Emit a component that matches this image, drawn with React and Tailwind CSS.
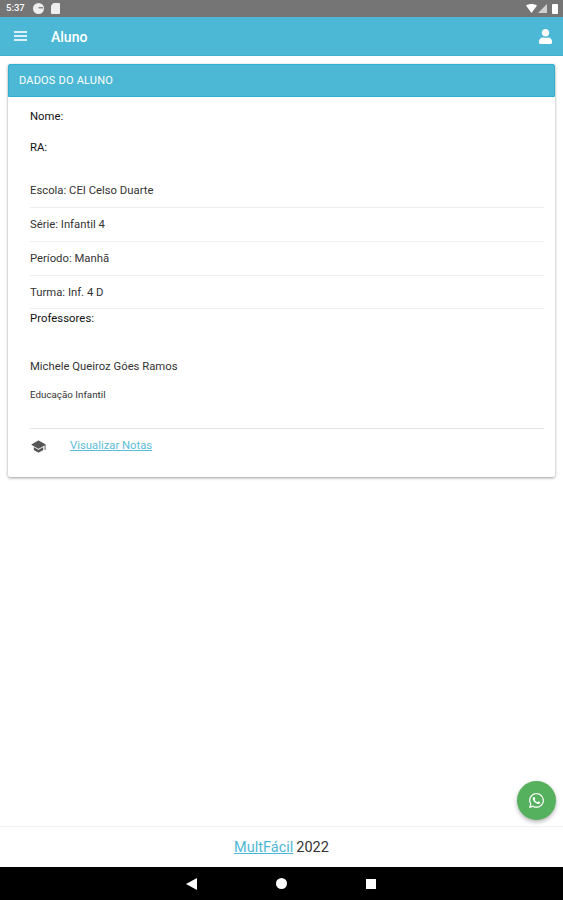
import { FaWhatsapp, FaUser } from "react-icons/fa";
import { IoSchool } from "react-icons/io5";

function Row({ label, value, height = "h-[34px]" }) {
    return (
        <div className={`${height} flex items-center pt-[2px] border-b border-[#eeeeee] text-[11.3px] text-[#333333]`}>
            {label}: {value}
        </div>
    );
}

export default function App() {
    return (
        <div className="h-[900px] flex flex-col bg-white font-['Roboto',sans-serif] relative overflow-hidden">
            {/* status bar */}
            <div className="h-[17px] bg-[#757575] flex items-center justify-between pl-[6px] pr-[5px] text-white">
                <div className="flex items-center">
                    <span className="text-[9.5px] font-medium">5:37</span>
                    <svg className="ml-[8px]" width="11" height="11" viewBox="0 0 11 11">
                        <circle cx="5.5" cy="5.5" r="5.5" fill="#eeeeee" />
                        <path d="M5.5 5.5H10V4H5.5z" fill="#8a8a8a" />
                    </svg>
                    <svg className="ml-[7px]" width="9" height="11" viewBox="0 0 9 11">
                        <path d="M2.5 0H8a1 1 0 0 1 1 1V10a1 1 0 0 1-1 1H1a1 1 0 0 1-1-1V2.5z" fill="#eeeeee" />
                    </svg>
                </div>
                <div className="flex items-center gap-[1px]">
                    <svg width="11" height="9" viewBox="0 0 11 9"><path d="M0 1.5C3 -.5 8 -.5 11 1.5L5.5 9z" fill="#fff" /></svg>
                    <svg width="9" height="9" viewBox="0 0 9 9"><path d="M9 0V9H0z" fill="#cfcfcf" /></svg>
                    <span className="ml-[4px] w-[6px] h-[10px] rounded-[1px] bg-white"></span>
                </div>
            </div>

            {/* toolbar */}
            <div className="h-[39px] bg-[#4db8d5] border-b border-[#3eb0ce] flex items-center justify-between pl-[14px] pr-[10px] text-white">
                <div className="flex items-center gap-[24px]">
                    <div className="flex flex-col gap-[2px] w-[13px]">
                        <span className="h-[2px] bg-white/80"></span>
                        <span className="h-[2px] bg-white/80"></span>
                        <span className="h-[2px] bg-white/80"></span>
                    </div>
                    <span className="text-[14px] font-medium pt-[2px]">Aluno</span>
                </div>
                <FaUser size={15} />
            </div>

            {/* card */}
            <div className="mx-[8px] mt-[8px] h-[413px] rounded-[2px] shadow-[0_1px_3px_rgba(0,0,0,0.4)] bg-white">
                <div className="h-[33px] bg-[#4db8d5] border border-[#2fb0d0] rounded-t-[2px] flex items-center pl-[10px] pt-[2px] text-[11px] tracking-[0.2px] text-white">
                    DADOS DO ALUNO
                </div>
                <div className="pl-[22px] pr-[11px]">
                    <div className="h-[39px] flex items-center pt-[1px] text-[11.3px] text-[#111111]">Nome:</div>
                    <div className="h-[23px] flex items-center pt-[1px] text-[11.3px] text-[#111111]">RA:</div>
                    <div className="h-[15px]"></div>
                    <Row label="Escola" value="CEI Celso Duarte" />
                    <Row label="Série" value="Infantil 4" />
                    <Row label="Período" value="Manhã" />
                    <Row label="Turma" value="Inf. 4 D" height="h-[33px]" />
                    <div className="h-[19px] flex items-center pt-[2px] text-[11.3px] tracking-[0.05px] text-[#111111]">Professores:</div>
                    <div className="h-[29px]"></div>
                    <div className="h-[20px] flex items-center text-[11.3px] text-[#333333]">Michele Queiroz Góes Ramos</div>
                    <div className="h-[8px]"></div>
                    <div className="h-[20px] flex items-center text-[9.8px] text-[#333333]">Educação Infantil</div>
                    <div className="h-[24px] border-b border-[#e4e4e4]"></div>
                    <div className="flex items-center h-[33px] pt-[1px]">
                        <IoSchool size={15} className="ml-[1px] text-[#555555]" />
                        <a href="#" className="ml-[24px] pt-[1px] text-[11.3px] text-[#5bbdd8] underline">Visualizar Notas</a>
                    </div>
                </div>
            </div>

            <div className="flex-1"></div>

            {/* footer */}
            <div className="h-[41px] border-t border-[#f2f2f2] flex items-center justify-center pt-[2px] text-[14.5px] text-[#333333]">
                <a href="#" className="text-[#4db8d5] underline">MultFácil</a>
                <span className="ml-[3px]">2022</span>
            </div>

            {/* nav bar */}
            <div className="h-[33px] bg-black flex items-center justify-center gap-[79px] pr-[1px]">
                <svg width="11" height="12" viewBox="0 0 11 12"><path d="M11 0V12L0 6z" fill="#fff" /></svg>
                <span className="w-[11px] h-[11px] rounded-full bg-white"></span>
                <span className="w-[10px] h-[10px] bg-white"></span>
            </div>

            {/* whatsapp */}
            <div className="absolute right-[7px] top-[781px] w-[39px] h-[39px] rounded-full bg-[#56b15e] shadow-[0_2px_4px_rgba(0,0,0,0.3)] flex items-center justify-center text-white">
                <FaWhatsapp size={17} />
            </div>
        </div>
    );
}
